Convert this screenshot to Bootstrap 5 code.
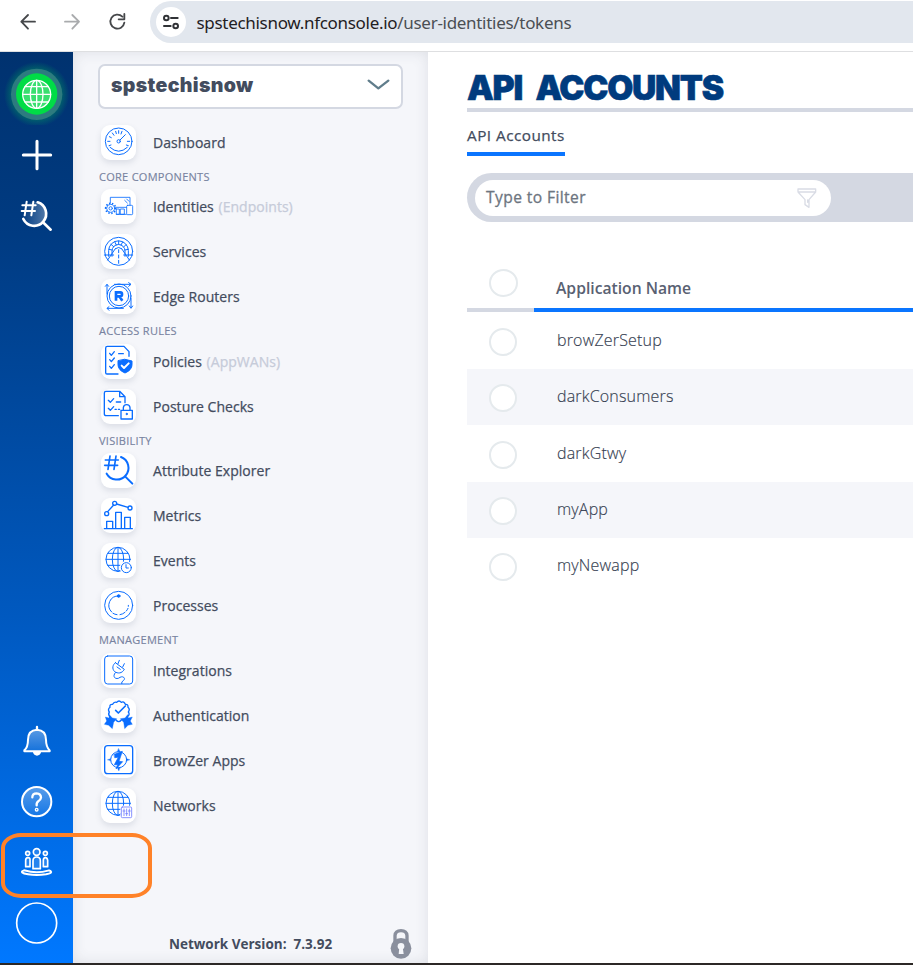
<!DOCTYPE html>
<html lang="en">
<head>
<meta charset="utf-8">
<meta name="viewport" content="width=device-width, initial-scale=1">
<title>API Accounts</title>
<link rel="stylesheet" href="https://cdn.jsdelivr.net/npm/bootstrap@5.3.0/dist/css/bootstrap.min.css">
<style>
body{font-family:"Open Sans",sans-serif;color:#434c5e;width:913px;height:965px;overflow:hidden;background:#fff}
svg{display:block;fill:none;stroke-linecap:round;stroke-linejoin:round}
.browser-bar{height:52px;border-bottom:1px solid #dedfe1;padding-top:1px}
.nav-glyphs{width:150px;height:42px}
.address{height:42px;background:#e2e7ee;border-radius:21px 0 0 21px;padding-left:6px}
.site-info{width:30px;height:30px;background:#fff}
.url-text{font-family:"Noto Sans",sans-serif;font-size:17px;color:#4b4f54;white-space:nowrap;margin:2px 0 0 10.5px;letter-spacing:-.3px}
.url-text b{font-weight:400;color:#1f2023}
.app-shell{height:911px}
.rail{width:73px;background:linear-gradient(#00326f,#003b82 20%,#0059c0 62%,#0078ff)}
.rail svg{stroke:#fff;stroke-width:6}
.side{width:355px;background:#f5f6fa;padding:12px 25px 0;box-shadow:inset 0 0 14px rgba(60,65,85,.12)}
.picker{height:45px;width:305px;border:2px solid #d4d8e2;border-radius:7px;background:#fff;padding:0 11px 3px 11px;margin-top:-.5px}
.picker-name{font-family:Inter,sans-serif;font-weight:900;font-size:19.5px;letter-spacing:.35px;white-space:nowrap;line-height:38px}
.menu-list{margin-top:11px}
.menu-row{height:45px;font-size:14px;padding-left:3px;color:#434c5e}
.menu-row span{white-space:nowrap;font-weight:500;-webkit-text-stroke:.25px;letter-spacing:.03px}
.menu-row i{font-style:normal;color:#c6cbd9;margin-left:1px}
.tile{width:35px;height:35px;border-radius:9px;background:#fff;box-shadow:0 3px 6px rgba(50,60,90,.13);margin-right:17px;flex:none}
.tile svg{width:35px;height:35px;stroke:#0a6dff;stroke-width:3}
.tile .solid{fill:#0a6dff}
.menu-head{height:19.5px;line-height:24px;font-size:11px;color:#7883a0;padding-left:1px;letter-spacing:.28px;white-space:nowrap;-webkit-text-stroke:.15px}
.version{font-size:13.5px;font-weight:700;color:#434c5e;height:39px;padding-left:71px;white-space:nowrap}
.version span{padding-top:1px}
.version svg{margin-right:-9.5px}
.content-area{padding:17px 0 0 39px}
.page-title{font-family:Inter,sans-serif;font-weight:900;color:#003b7e;font-size:33.7px;line-height:37px;height:39px;letter-spacing:-1.25px;word-spacing:8px;-webkit-text-stroke:.6px #003b7e}
.title-rule{height:4px;background:#d4d8e2}
.tab-link{font-size:15.3px;font-weight:500;height:44px;line-height:47px;width:98px;border-bottom:4px solid #0a75ff;white-space:nowrap;color:#434c5e;letter-spacing:.47px;-webkit-text-stroke:.25px}
.filter-bar{height:49px;margin-top:17px;border-radius:25px 0 0 25px;background:#d4d8e2;padding-left:8px}
.filter-field{height:36px;width:356px;background:#fff;border-radius:18px;padding:0 14px 0 11px;font-size:15.6px;font-weight:500;color:#6d7580;letter-spacing:.4px}
.filter-field span{-webkit-text-stroke:.3px;padding-top:1px}
.head-row{height:90px}
.head-pick{width:67px;border-bottom:4px solid #d4d8e2;padding:47px 0 0 22px}
.head-name{border-bottom:4px solid #0a75ff;padding:55px 0 0 22px;font-size:15.7px;font-weight:600;color:#596172}
.round-box{width:28px;height:28px;border:2px solid #e5eaed;border-radius:50%;background:#fff;flex:none}
.head-pick .round-box{width:29px}
.row-stack{padding-top:.8px}
.data-row{height:56.3px;padding:2px 0 0 22px;font-size:16px;font-weight:300;color:#343d50;letter-spacing:.18px}
.data-row span{margin-left:40px;padding-bottom:4px;-webkit-text-stroke:.15px}
.data-row:nth-child(even){background:#f5f6fa}
.callout-box{position:absolute;left:1px;top:833px;width:151px;height:65px;border:4.5px solid #ff8228;border-radius:20px/15px}
.base-line{height:2px;background:#2c2826}
</style>
<script src="https://cdn.jsdelivr.net/npm/bootstrap@5.3.0/dist/js/bootstrap.bundle.min.js"></script>
</head>
<body class="position-relative">
<header class="browser-bar d-flex">
  <svg class="nav-glyphs" viewBox="0 3 450 126" stroke="#45474a" stroke-width="5.5" stroke-linecap="butt" stroke-linejoin="miter"><path d="M105 65H64M84 45 64 65 84 86"/><path stroke="#a9abad" d="M195 65H236M217 45 237 65 217 86"/><path d="M373 68A21 21 0 1 1 367 50M373 42V58H356"/></svg>
  <div class="address d-flex align-items-center flex-grow-1">
    <div class="site-info rounded-circle"><svg width="30" height="30" viewBox="0 0 90 90" stroke="#303236" stroke-width="6" stroke-linecap="butt"><circle cx="31" cy="33" r="7"/><path d="M45 33H65M24 57H44"/><circle cx="59" cy="57" r="7"/></svg></div>
    <div class="url-text"><b>spstechisnow.nfconsole.io</b>/user-identities/tokens</div>
  </div>
</header>
<div class="app-shell d-flex">
  <nav class="rail d-flex flex-column flex-shrink-0">
    <svg width="73" height="73" viewBox="0 6 219 219"><defs><radialGradient id="halo"><stop offset=".7" stop-color="#00b85a" stop-opacity=".4"/><stop offset="1" stop-color="#00b85a" stop-opacity="0"/></radialGradient></defs><circle cx="110" cy="133" r="98" fill="url(#halo)" stroke="none"/><circle cx="110" cy="133" r="77" fill="#2d7b7f" stroke="none"/><circle cx="110" cy="132" r="62" fill="#00dc46" stroke="none"/><g stroke-width="4"><circle cx="110" cy="133" r="42" fill="#39df70"/><ellipse cx="110" cy="133" rx="19" ry="42"/><path d="M110 91V175M68 133H152M75 110H145M75 156H145"/></g></svg>
    <svg width="73" height="60" viewBox="0 225 219 180"><path stroke-width="9" d="M70 315H152M111 274V356"/></svg>
    <svg width="73" height="62" viewBox="0 405 219 186"><defs><linearGradient id="lens" x1="0" x2="1"><stop stop-color="#fff" stop-opacity=".02"/><stop offset="1" stop-color="#fff" stop-opacity=".32"/></linearGradient></defs><circle cx="104" cy="491" r="35" fill="url(#lens)" stroke="none"/><path stroke-width="8" d="M113 457A36 36 0 1 1 70 507M129 517 152 539"/><path stroke-width="6" d="M80 455 74 496M100 455 94 496M67 466H107M65 483H105"/></svg>
    <div class="mt-auto">
      <svg width="73" height="60" viewBox="0 3 219 180"><defs><linearGradient id="soft" x1="0" y1="0" x2="0" y2="1"><stop stop-color="#fff" stop-opacity=".35"/><stop offset="1" stop-color="#fff" stop-opacity=".08"/></linearGradient></defs><path fill="url(#soft)" d="M111 59C91 60 84 72 84 89C84 105 82 113 73 121V124H149V121C141 113 138 105 138 89C138 72 130 60 111 59Z"/><path stroke-width="7" d="M111 51V57"/><path fill="#fff" d="M102 127H120Q118 134 111 134T102 127Z"/></svg>
      <svg width="73" height="60" viewBox="0 183 219 180"><circle cx="110" cy="275" r="44" fill="url(#soft)"/><path d="M97 262Q97 250 110 250 123 251 123 263 122 270 115 274 109 278 110 286" stroke-width="7"/><circle cx="110" cy="299" r="4" stroke-width="4"/></svg>
      <svg width="73" height="60" viewBox="0 363 219 180"><g stroke-width="5" fill="#fff" fill-opacity=".15"><circle cx="110" cy="426" r="10"/><circle cx="83" cy="430" r="6"/><circle cx="136" cy="430" r="6"/><path d="M99 476V452Q99 441 110 441T121 452V476ZM77 470V451Q77 443 84 443T90 451V470ZM130 470V451Q130 443 136 443T143 451V470Z"/></g><path stroke-width="6" d="M72 481C60 485 66 490 84 493Q110 497 138 493C155 490 158 485 147 481Q127 487 110 487T72 481Z"/></svg>
      <svg width="73" height="72" viewBox="0 543 219 216"><circle cx="110" cy="639" r="60" stroke-width="5"/></svg>
    </div>
  </nav>
  <aside class="side d-flex flex-column flex-shrink-0">
    <div class="picker d-flex align-items-center justify-content-between"><div class="picker-name">spstechisnow</div><svg width="23" height="13" viewBox="0 0 69 39" stroke="#607d8b" stroke-width="7"><path d="M5 8 34 31 64 8"/></svg></div>
    <div class="menu-list">
      <div class="menu-row d-flex align-items-center"><div class="tile"><svg viewBox="0 0 105 105"><circle cx="53" cy="49" r="40"/><circle cx="53" cy="49" r="5"/><path d="M57 45 73 29M27 67Q53 91 79 67M20 49H27M25 35 31 38M34 24 39 31M44 19 46 26M53 17V25M63 19 60 27M86 49H79M24 62 30 60M82 62 76 60"/></svg></div><span>Dashboard</span></div>
      <div class="menu-head">CORE COMPONENTS</div>
      <div class="menu-row d-flex align-items-center"><div class="tile"><svg viewBox="0 0 105 105"><g stroke-width="2.5"><path d="M28 42V25H87V48M42 55H76M71 34 79 42M77 30 84 37M47 60H55V76H47ZM59 60H70V76H59ZM46 76H76"/><rect x="77" y="49" width="18" height="28" rx="3"/><circle cx="29" cy="58" r="12"/><circle cx="29" cy="58" r="5"/></g><path stroke-dasharray="4 5" stroke-linecap="butt" stroke-width="5" d="M14 58A15 15 0 0 1 44 58A15 15 0 0 1 14 58"/></svg></div><span>Identities <i>(Endpoints)</i></span></div>
      <div class="menu-row d-flex align-items-center"><div class="tile"><svg viewBox="0 0 105 105"><circle cx="53" cy="52" r="42"/><path d="M23 67V50A29 29 0 0 1 82 50V67M33 67V51A19 19 0 0 1 72 51V67M10 63H38M68 63H95M43 44 20 78M62 44 85 78M43 44Q53 36 62 44M24 46 33 48M30 31 38 38M41 23 46 33M53 21V31M65 24 60 33M75 32 68 39M82 46 72 48"/><path stroke-dasharray="9 7" d="M53 47V91"/></svg></div><span>Services</span></div>
      <div class="menu-row d-flex align-items-center"><div class="tile"><svg viewBox="0 0 105 105"><circle cx="54" cy="51" r="36"/><circle cx="54" cy="51" r="29"/><path d="M18 45V17M13 22 18 16 23 22M40 16H88M83 11 90 16 83 22M90 57V84M85 81 90 88 95 81M67 88H19M24 83 18 88 24 94"/><path stroke-width="8" stroke-linecap="butt" stroke-linejoin="miter" d="M45 65V40H58Q63 40 63 46T58 52H45M55 52 64 65"/></svg></div><span>Edge Routers</span></div>
      <div class="menu-head">ACCESS RULES</div>
      <div class="menu-row d-flex align-items-center"><div class="tile"><svg viewBox="0 0 105 105"><path stroke-width="4" d="M51 90H18Q14 90 14 86V12Q14 7 19 7H69L84 23V37M26 28 31 34 40 23M26 47 31 53 40 42M26 67 31 73 40 62M53 29H67"/><path class="solid" d="M72 46 93 51V62Q93 78 72 87 51 78 51 62V51Z"/><path stroke="#fff" stroke-width="6" d="M62 65 69 72 83 58"/></svg></div><span>Policies <i>(AppWANs)</i></span></div>
      <div class="menu-row d-flex align-items-center"><div class="tile"><svg viewBox="0 0 105 105"><path stroke-width="4" d="M52 80H16Q10 80 10 75V12Q10 7 15 7H56L72 23V41M56 8V23H71M22 34 28 40 38 29M22 58 28 64 38 53M46 39H59M42 61H46M52 61H56"/><path stroke-width="4" d="M60 64H94V90H60ZM67 63V56Q68 47 77 47T87 56V63"/><circle class="solid" cx="77" cy="75" r="2"/></svg></div><span>Posture Checks</span></div>
      <div class="menu-head">VISIBILITY</div>
      <div class="menu-row d-flex align-items-center"><div class="tile"><svg viewBox="0 0 105 105"><path stroke-width="6" d="M60 12A35 35 0 1 1 17 62M73 71 94 92"/><path stroke-width="5" d="M27 9 21 49M45 9 39 49M13 21H52M11 37H50"/></svg></div><span>Attribute Explorer</span></div>
      <div class="menu-row d-flex align-items-center"><div class="tile"><svg viewBox="0 0 105 105"><path stroke-width="4" d="M10 92H94M17 91V70H35V91M44 91V43H61V91M71 91V58H88V91M20 41 38 21M47 18 81 28"/><g stroke-width="4"><circle cx="17" cy="47" r="6"/><circle cx="41" cy="16" r="6"/><circle cx="87" cy="30" r="6"/></g></svg></div><span>Metrics</span></div>
      <div class="menu-row d-flex align-items-center"><div class="tile"><svg viewBox="0 0 105 105"><circle cx="51" cy="49" r="36"/><ellipse cx="51" cy="49" rx="17" ry="36"/><path d="M51 13V85M15 49H87M20 31H82M20 67H72"/><circle cx="76" cy="74" r="20" fill="#fff" stroke="none"/><circle cx="76" cy="74" r="15"/><path d="M75 65V75H82"/></svg></div><span>Events</span></div>
      <div class="menu-row d-flex align-items-center"><div class="tile"><svg viewBox="0 0 105 105"><circle cx="53" cy="52" r="42"/><path d="M53 24A28 28 0 0 0 32 72M36 76A28 28 0 0 0 48 80M57 80A28 28 0 0 0 72 73M76 69A28 28 0 0 0 81 61M82 55V52"/><circle class="solid" cx="53" cy="24" r="4"/></svg></div><span>Processes</span></div>
      <div class="menu-head">MANAGEMENT</div>
      <div class="menu-row d-flex align-items-center"><div class="tile"><svg viewBox="0 0 105 105"><rect x="11" y="9" width="84" height="84" rx="9"/><path d="M43 29 70 49C63 62 50 62 41 56 32 47 35 35 43 29ZM51 32 55 22M65 42 70 32M43 59C31 73 47 82 57 73 65 68 75 75 68 82Q60 86 62 92M48 42 58 49"/></svg></div><span>Integrations</span></div>
      <div class="menu-row d-flex align-items-center"><div class="tile"><svg viewBox="0 0 105 105"><path stroke-width="4" d="M27 57Q20 49 25 42 19 34 27 28 25 18 35 19 39 10 47 13 54 5 61 13 69 9 73 19 82 18 81 28 88 34 82 42 88 50 79 56M45 66Q53 76 61 66"/><path stroke-width="5" d="M44 37 52 45 73 24"/><path class="solid" stroke-width="1" d="M25 50 34 60 47 62 38 73 34 92 23 82 10 79 17 69 13 57 24 60ZM80 50 72 60 58 62 68 73 71 92 81 82 94 79 88 69 94 57 82 60Z"/></svg></div><span>Authentication</span></div>
      <div class="menu-row d-flex align-items-center"><div class="tile"><svg viewBox="0 0 105 105"><rect x="11" y="8" width="84" height="84" rx="9" stroke-width="4"/><circle cx="53" cy="50" r="24"/><path class="solid" stroke-width="1" d="M53 17 57 26H49ZM20 50 29 47V53ZM86 50 77 47V53ZM53 83 49 74H57Z"/><path class="solid" stroke-width="2" d="M40 34 64 25 54 55 65 56 45 78 50 65H40L52 43 42 44Z"/></svg></div><span>BrowZer Apps</span></div>
      <div class="menu-row d-flex align-items-center"><div class="tile"><svg viewBox="0 0 105 105"><circle cx="51" cy="46" r="36"/><ellipse cx="51" cy="46" rx="17" ry="36"/><path d="M51 10V82M15 46H87M20 28H82M20 64H75"/><rect x="58" y="53" width="37" height="37" fill="#fff" stroke="none"/><g stroke="#6f7cff" stroke-width="2.5"><rect x="61" y="57" width="31" height="32" rx="3"/><path d="M69 63V83M77 63V83M85 63V83M66 69H72M74 77H80M82 69H88"/></g></svg></div><span>Networks</span></div>
    </div>
    <div class="version mt-auto d-flex align-items-center"><span>Network Version:&nbsp; 7.3.92</span><svg class="ms-auto" width="23" height="32" viewBox="0 0 69 96"><path stroke="#8a8f9d" stroke-width="10" d="M15 45V23Q16 8 33 8T51 23V45"/><circle cx="33" cy="61" r="31" fill="#8a8f9d"/><circle cx="33" cy="55" r="10" fill="#f5f6fa"/><path fill="#f5f6fa" d="M28 58H38L41 78H26Z"/></svg></div>
  </aside>
  <main class="content-area flex-grow-1">
    <h1 class="page-title mb-0">API ACCOUNTS</h1>
    <div class="title-rule"></div>
    <div class="tab-link">API Accounts</div>
    <div class="filter-bar d-flex align-items-center"><div class="filter-field d-flex align-items-center justify-content-between"><span>Type to Filter</span><svg width="20" height="22" viewBox="0 0 60 66" stroke="#d9dce5" stroke-width="4"><path d="M3 6H56V15L36 38V61L24 53V38L3 15ZM3 15H56M32 39V46"/></svg></div></div>
    <div class="head-row d-flex"><div class="head-pick"><div class="round-box"></div></div><div class="head-name flex-grow-1">Application Name</div></div>
    <div class="row-stack">
      <div class="data-row d-flex align-items-center"><div class="round-box"></div><span>browZerSetup</span></div>
      <div class="data-row d-flex align-items-center"><div class="round-box"></div><span>darkConsumers</span></div>
      <div class="data-row d-flex align-items-center"><div class="round-box"></div><span>darkGtwy</span></div>
      <div class="data-row d-flex align-items-center"><div class="round-box"></div><span>myApp</span></div>
      <div class="data-row d-flex align-items-center"><div class="round-box"></div><span>myNewapp</span></div>
    </div>
  </main>
</div>
<div class="base-line"></div>
<div class="callout-box"></div>
</body>
</html>
